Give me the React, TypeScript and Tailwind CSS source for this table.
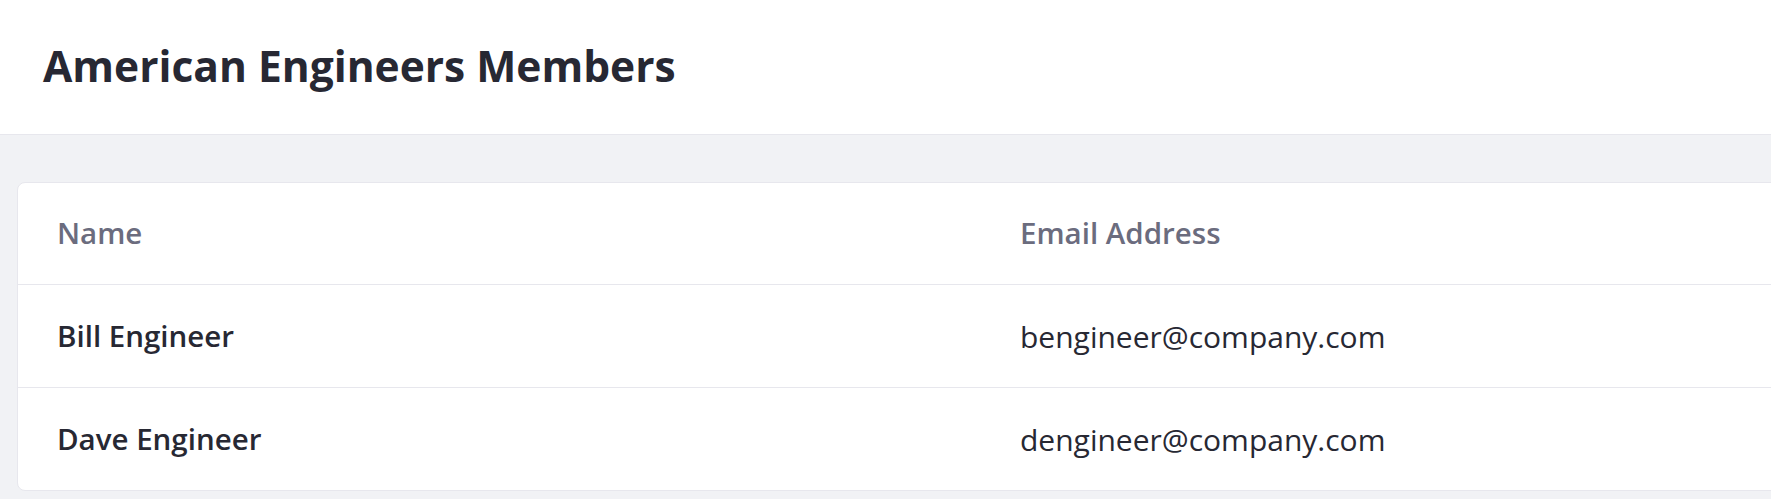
const members = [
  { name: "Bill Engineer", email: "bengineer@company.com" },
  { name: "Dave Engineer", email: "dengineer@company.com" },
];

export default function App() {
  return (
    <div
      className="w-[1771px] h-[499px] overflow-hidden bg-[#f1f2f5] text-[#272833]"
      style={{ fontFamily: '"Open Sans", "Noto Sans", sans-serif' }}
    >
      <header className="h-[135px] bg-white border-b border-[#e7e7ed] flex items-center px-[43px]">
        <h1 className="text-[42.5px] font-bold leading-none -mt-[2px]">American Engineers Members</h1>
      </header>

      <div className="pt-[47px] pl-[17px]">
        <div className="w-[1800px] bg-white border border-[#e7e7ed] rounded-[8px]">
          <div className="h-[102px] flex items-center px-[39px] border-b border-[#e7e7ed] text-[29.5px] font-semibold text-[#6b6c7e]">
            <div className="w-[963px]">Name</div>
            <div>Email Address</div>
          </div>
          {members.map((m, i) => (
            <div
              key={m.email}
              className={
                i === 0
                  ? "h-[103px] flex items-center px-[39px] border-b border-[#e7e7ed] text-[30px]"
                  : "h-[102px] flex items-center px-[39px] text-[30px]"
              }
            >
              <div className="w-[963px] text-[29.5px] font-semibold">{m.name}</div>
              <div>{m.email}</div>
            </div>
          ))}
        </div>
      </div>
    </div>
  );
}
